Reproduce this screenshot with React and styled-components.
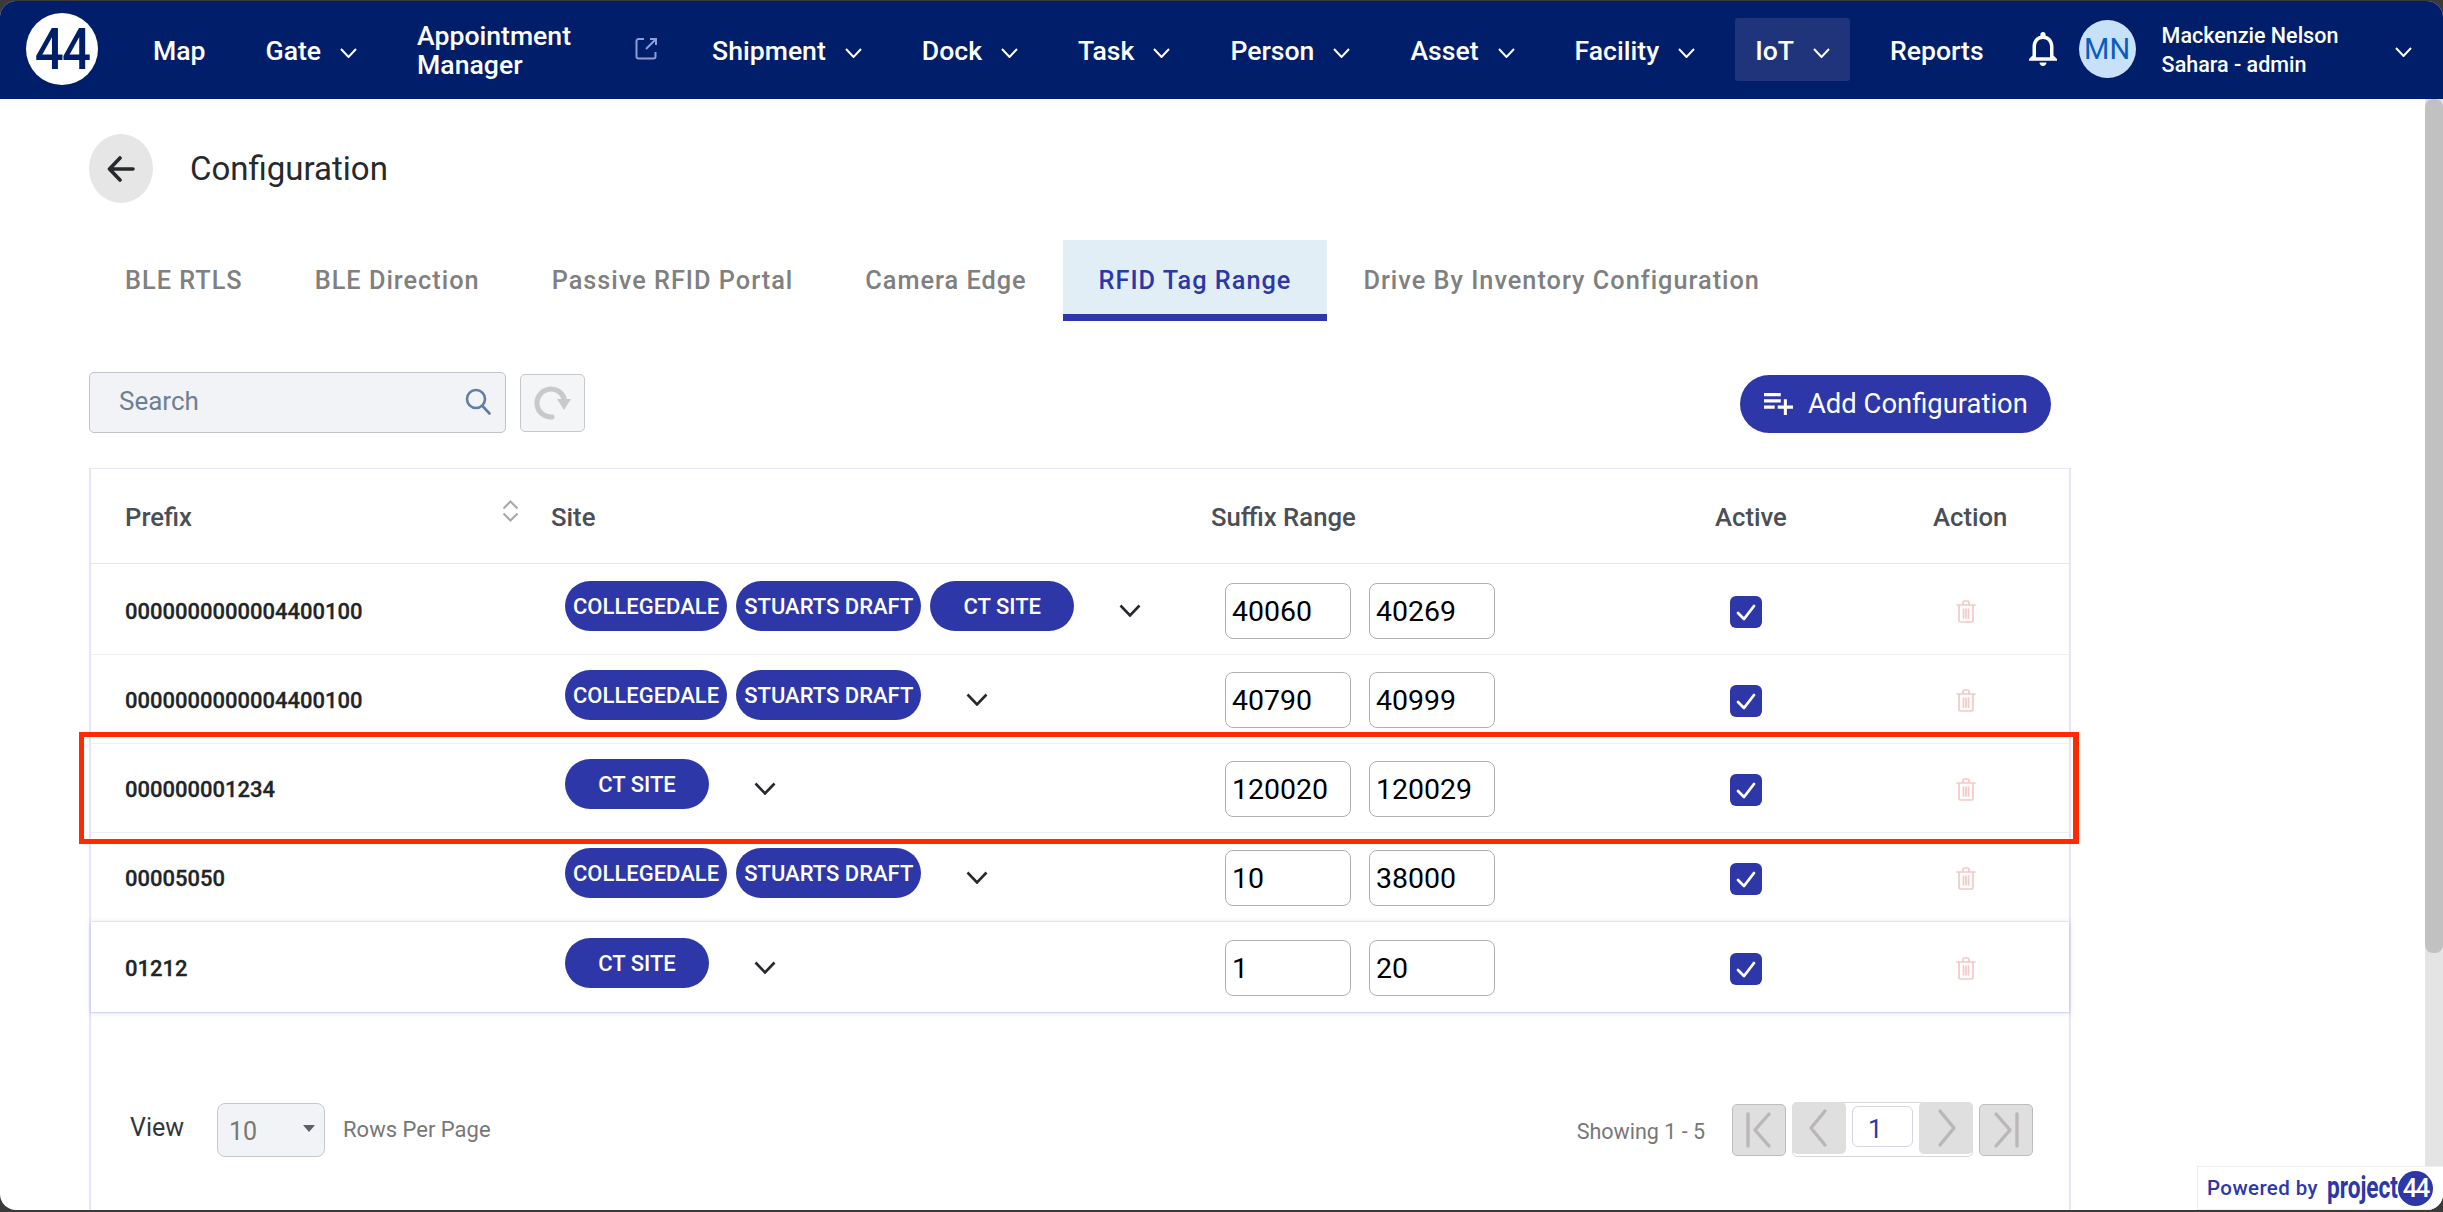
import React from "react";
import styled, { createGlobalStyle, css } from "styled-components";

const GlobalStyle = createGlobalStyle`
  html, body {
    margin: 0;
    padding: 0;
    background: #3a3a3a;
    overflow: hidden;
  }
  * {
    box-sizing: border-box;
  }
  body {
    font-family: Roboto, "Liberation Sans", sans-serif;
  }
`;

const Window = styled.div`
  position: relative;
  width: 2443px;
  height: 1212px;
  padding: 1px 0 2px;
  background: #3a3a3a;
`;
const Shell = styled.div`
  display: flex;
  flex-direction: column;
  height: 100%;
  background: #fff;
  border-radius: 16px;
  overflow: hidden;
`;

/* top bar */
const TopBar = styled.header`
  display: flex;
  align-items: center;
  flex: 0 0 98px;
  padding: 0 0 2px 26px;
  background: #011e6b;
  color: #fff;
`;
const Logo = styled.div`
  flex: 0 0 72px;
  height: 72px;
  display: flex;
  align-items: center;
  justify-content: center;
  margin-right: 35px;
  border-radius: 50%;
  background: #fff;
  color: #011e6b;
  font-size: 58px;
  font-weight: 500;
  letter-spacing: -2px;
`;
const LogoText = styled.span`
  display: inline-block;
  transform: scaleX(0.88);
`;
const NavList = styled.nav`
  display: flex;
  align-items: center;
  gap: 20px;
`;
const NavItem = styled.div`
  display: flex;
  align-items: center;
  height: 63px;
  padding: 2px 20px 0;
  font-size: 26.6px;
  font-weight: 500;
  line-height: 29px;
  border-radius: 3px;
  background: ${(props) => (props.$active ? "#20347c" : "transparent")};
`;
const NavLabelWrap = styled.span`
  width: 157px;
`;
const NavChevron = styled.svg`
  width: 17px;
  height: 10px;
  margin: 5px 0 0 19px;
  fill: none;
  stroke: #fff;
  stroke-width: 2;
`;
const ExternalIcon = styled.svg`
  width: 23px;
  height: 23px;
  margin: -3px -6px 0 61px;
  fill: none;
  stroke: #8d9dd6;
  stroke-width: 2;
`;
const BellIcon = styled.svg`
  width: 28px;
  height: 36px;
  margin: 0 22px 0 25px;
  fill: #fff;
`;
const Avatar = styled.div`
  flex: 0 0 57px;
  height: 58px;
  display: flex;
  align-items: center;
  justify-content: center;
  border-radius: 50%;
  background: #c7e1f9;
  color: #0a5cbe;
  font-size: 29px;
`;
const UserInfo = styled.div`
  width: 233px;
  margin-left: 26px;
  padding-top: 2px;
  font-size: 21.5px;
  font-weight: 500;
  line-height: 29px;
`;
const UserChevron = styled(NavChevron)`
  margin-left: 0;
`;

/* page body */
const Body = styled.div`
  display: flex;
  flex: 1;
  min-height: 0;
`;
const Content = styled.main`
  flex: 1;
  min-width: 0;
  padding: 35px 0 0 89px;
`;
const TrackBar = styled.div`
  flex: 0 0 18px;
  background: #e4e4e4;
`;
const TrackThumb = styled.div`
  height: 854px;
  background: #c1c1c1;
  border-radius: 8px;
`;

const TitleRow = styled.div`
  display: flex;
  align-items: center;
  height: 69px;
`;
const BackButton = styled.button`
  width: 64px;
  height: 69px;
  display: flex;
  align-items: center;
  justify-content: center;
  padding: 0;
  border: none;
  border-radius: 50%;
  background: #e6e6e6;
`;
const BackIcon = styled.svg`
  width: 28px;
  height: 26px;
  fill: none;
  stroke: #26292d;
  stroke-width: 3.6;
  stroke-linecap: round;
  stroke-linejoin: round;
`;
const PageTitle = styled.h1`
  margin: 0 0 0 37px;
  font-size: 33px;
  font-weight: 400;
  color: #26292d;
`;

const Tabs = styled.div`
  display: flex;
  margin-top: 37px;
  height: 81px;
`;
const Tab = styled.div`
  display: flex;
  align-items: center;
  padding: 7px 36px ${(props) => (props.$active ? "0" : "7px")};
  font-size: 25.3px;
  font-weight: 500;
  letter-spacing: 1px;
  color: ${(props) => (props.$active ? "#2e37a8" : "#808080")};
  ${(props) =>
    props.$active &&
    css`
      background: #e1eef5;
      border-bottom: 7px solid #2e37a8;
    `}
`;

const Toolbar = styled.div`
  display: flex;
  align-items: center;
  width: 1962px;
  height: 61px;
  margin-top: 51px;
`;
const SearchBox = styled.div`
  display: flex;
  align-items: center;
  width: 417px;
  height: 61px;
  padding: 0 14px 3px 27px;
  background: #f1f3f7;
  border: 1.5px solid #c0c3c9;
  border-radius: 5px;
`;
const SearchInput = styled.input`
  flex: 1;
  min-width: 0;
  border: none;
  outline: none;
  background: transparent;
  font-family: inherit;
  font-size: 26px;
  &::placeholder {
    color: #6f7e92;
    opacity: 1;
  }
`;
const SearchIcon = styled.svg`
  width: 26px;
  height: 27px;
  fill: none;
  stroke: #5f7ea3;
  stroke-width: 2.6;
  stroke-linecap: round;
`;
const RefreshButton = styled.button`
  width: 65px;
  height: 58px;
  display: flex;
  align-items: center;
  justify-content: center;
  margin-left: 14px;
  padding: 0;
  background: #f4f5f7;
  border: 1.5px solid #c6c8cc;
  border-radius: 5px;
`;
const RefreshIcon = styled.svg`
  width: 40px;
  height: 36px;
`;
const AddButton = styled.button`
  display: flex;
  align-items: center;
  width: 311px;
  height: 58px;
  margin: 2px 0 0 auto;
  padding: 0 0 0 24px;
  border: none;
  border-radius: 29px;
  background: #2e37a8;
  color: #fff;
  font-family: inherit;
  font-size: 27.4px;
  font-weight: 400;
`;
const AddIcon = styled.svg`
  width: 29px;
  height: 22px;
  margin-right: 15px;
  fill: #fff;
`;

/* table */
const columns = css`
  display: grid;
  grid-template-columns: 426px 660px 504px 218px 1fr;
  padding-left: 34px;
  align-items: center;
`;
const Card = styled.section`
  width: 1982px;
  height: 800px;
  margin-top: 35px;
  border: solid #e4e4fa;
  border-width: 1px 2px 0;
`;
const HeadRow = styled.div`
  ${columns}
  height: 95px;
  padding-top: 2px;
  border-bottom: 1.5px solid #e6e6ee;
  font-size: 25.7px;
  font-weight: 500;
  color: #4a4f57;
`;
const PrefixHead = styled.div`
  display: flex;
  align-items: flex-start;
  justify-content: space-between;
  padding-right: 32px;
`;
const SortIcon = styled.svg`
  width: 17px;
  height: 22px;
  margin-top: -2px;
  fill: none;
  stroke: #a8a8a8;
  stroke-width: 2;
`;
const Row = styled.div`
  ${columns}
  position: relative;
  height: ${(props) => (props.$tall ? "91px" : "89px")};
  padding-top: ${(props) => (props.$first ? "2px" : "0")};
  margin-left: ${(props) => (props.$hover ? "-1px" : "0")};
  margin-right: ${(props) => (props.$hover ? "-1px" : "0")};
  border-bottom: 1.5px solid ${(props) => (props.$hover ? "#d4d4f5" : "#f0f0f4")};
  ${(props) =>
    props.$hover &&
    css`
      border-left: 1.5px solid #d4d4f5;
      border-right: 1.5px solid #d4d4f5;
      box-shadow: 0 0 4px rgba(180, 180, 240, 0.5);
    `}
`;
const Highlight = styled.div`
  position: absolute;
  top: -12px;
  bottom: -12px;
  left: -12px;
  right: -10px;
  border: 5px solid #ff2a00;
  border-right-width: 6px;
  pointer-events: none;
`;
const Prefix = styled.div`
  padding-top: 2px;
  font-size: 22px;
  font-weight: 500;
  color: #212529;
  -webkit-text-stroke: 0.3px #212529;
`;
const SiteCell = styled.div`
  display: flex;
  align-items: center;
  padding-left: 14px;
`;
const Chip = styled.div`
  min-width: 144px;
  height: 50px;
  display: flex;
  align-items: center;
  justify-content: center;
  margin: 0 9px 9px 0;
  padding: 2px 8px 0;
  border-radius: 25px;
  background: #2e37a8;
  color: #fff;
  font-size: 22px;
  font-weight: 500;
  white-space: nowrap;
`;
const SiteChevron = styled.svg`
  width: 22px;
  height: 13px;
  margin-left: 36px;
  fill: none;
  stroke: #26292d;
  stroke-width: 2.6;
`;
const RangeCell = styled.div`
  display: flex;
  gap: 18px;
  padding: 2px 0 0 14px;
`;
const RangeInput = styled.input`
  width: 126px;
  height: 56px;
  padding: 0 0 0 6px;
  border: 1.5px solid #b0b0b0;
  border-radius: 8px;
  outline: none;
  background: #fff;
  color: #000;
  font-family: inherit;
  font-size: 28.5px;
`;
const CheckCell = styled.div`
  padding: 4px 0 0 15px;
`;
const CheckBox = styled.div`
  width: 32px;
  height: 32px;
  display: flex;
  align-items: center;
  justify-content: center;
  border-radius: 6px;
  background: #2e37a8;
`;
const CheckIcon = styled.svg`
  width: 20px;
  height: 18px;
  fill: none;
  stroke: #fff;
  stroke-width: 2.8;
  stroke-linecap: round;
  stroke-linejoin: round;
`;
const ActionCell = styled.div`
  display: flex;
  padding: 3px 0 0 23px;
`;
const TrashIcon = styled.svg`
  width: 20px;
  height: 23px;
  fill: none;
  stroke: #f3c9c6;
  stroke-width: 1.7;
  stroke-linecap: round;
`;

/* footer */
const Footer = styled.div`
  display: flex;
  align-items: center;
  padding: 89px 36px 0 39px;
`;
const ViewLabel = styled.span`
  margin: -4px 33px 0 0;
  font-size: 25px;
  color: #33373c;
`;
const PageSize = styled.div`
  display: flex;
  align-items: center;
  justify-content: space-between;
  width: 108px;
  height: 54px;
  padding: 4px 9px 0 11px;
  background: #f1f3f7;
  border: 1.5px solid #c4c8d2;
  border-radius: 8px;
  color: #777;
  font-size: 25px;
`;
const Caret = styled.span`
  width: 0;
  height: 0;
  margin-top: -6px;
  border-left: 6px solid transparent;
  border-right: 6px solid transparent;
  border-top: 7px solid #5c6068;
`;
const MutedText = styled.span`
  font-size: 21.5px;
  color: #777;
`;
const RowsLabel = styled(MutedText)`
  margin-left: 18px;
  font-size: 22px;
`;
const Showing = styled(MutedText)`
  margin-left: auto;
  margin-right: 27px;
  padding-top: 4px;
`;
const PagerEdge = styled.button`
  width: 54px;
  height: 52px;
  display: flex;
  align-items: center;
  justify-content: center;
  padding: 0;
  background: #dfdfdf;
  border: 1.5px solid #bdbdbd;
  border-radius: 5px;
`;
const PagerMiddle = styled.div`
  display: flex;
  justify-content: space-between;
  width: 181px;
  height: 55px;
  margin: 0 6px;
  border: 1.5px solid #d8d8d8;
  border-top-width: 1px;
  border-radius: 5px;
`;
const PagerStep = styled.button`
  width: 54px;
  height: 52px;
  display: flex;
  align-items: center;
  justify-content: center;
  margin: -1px -1px 0;
  padding: 0;
  background: #dfdfdf;
  border: none;
  border-radius: 5px;
`;
const PageNumber = styled.div`
  width: 61px;
  height: 41px;
  align-self: center;
  margin-top: -6px;
  padding: 7px 0 0 15px;
  border: 1.5px solid #d2d6e2;
  border-radius: 6px;
  background: #fff;
  color: #2e37a8;
  font-size: 26px;
  line-height: 30px;
`;
const PagerIcon = styled.svg`
  width: 44px;
  height: 40px;
  fill: none;
  stroke: #bcb7b7;
  stroke-width: 3.4;
  stroke-linecap: round;
  stroke-linejoin: round;
`;

/* badge */
const PoweredBadge = styled.div`
  position: absolute;
  left: 2197px;
  right: 0;
  top: 1166px;
  height: 44px;
  display: flex;
  align-items: center;
  padding-left: 9px;
  background: #fff;
  border: 1.5px solid #eeeeee;
  border-right: none;
  border-radius: 0 0 16px 0;
  color: #2e37a8;
`;
const PoweredText = styled.span`
  font-size: 20.5px;
  font-weight: 500;
  letter-spacing: 0.4px;
`;
const PoweredBrand = styled.span`
  display: inline-block;
  width: 71px;
  margin-left: 9px;
  font-size: 31px;
  font-weight: 700;
  line-height: 36px;
  transform: scaleX(0.73);
  transform-origin: left center;
`;
const PoweredMark = styled.span`
  width: 35px;
  height: 35px;
  display: flex;
  align-items: center;
  justify-content: center;
  border-radius: 50%;
  background: #2e37a8;
  color: #fff;
  font-size: 26px;
  font-weight: 500;
  letter-spacing: -2px;
`;

const navItems = [
  { label: "Map" },
  { label: "Gate", menu: true },
  { label: "Appointment Manager", link: true },
  { label: "Shipment", menu: true },
  { label: "Dock", menu: true },
  { label: "Task", menu: true },
  { label: "Person", menu: true },
  { label: "Asset", menu: true },
  { label: "Facility", menu: true },
  { label: "IoT", menu: true, active: true },
  { label: "Reports" },
];

const tabs = [
  "BLE RTLS",
  "BLE Direction",
  "Passive RFID Portal",
  "Camera Edge",
  "RFID Tag Range",
  "Drive By Inventory Configuration",
];

const rows = [
  { prefix: "0000000000004400100", sites: ["COLLEGEDALE", "STUARTS DRAFT", "CT SITE"], from: "40060", to: "40269" },
  { prefix: "0000000000004400100", sites: ["COLLEGEDALE", "STUARTS DRAFT"], from: "40790", to: "40999" },
  { prefix: "000000001234", sites: ["CT SITE"], from: "120020", to: "120029" },
  { prefix: "00005050", sites: ["COLLEGEDALE", "STUARTS DRAFT"], from: "10", to: "38000" },
  { prefix: "01212", sites: ["CT SITE"], from: "1", to: "20" },
];

const Chevron = () => (
  <NavChevron viewBox="0 0 17 10">
    <path d="M1 1l7.5 8L16 1" />
  </NavChevron>
);

const TableRow = ({ row, index }) => (
  <Row
    $first={index === 0}
    $tall={index === 0 || index === rows.length - 1}
    $hover={index === rows.length - 1}
  >
    <Prefix>{row.prefix}</Prefix>
    <SiteCell>
      {row.sites.map((site) => (
        <Chip key={site}>{site}</Chip>
      ))}
      <SiteChevron viewBox="0 0 22 13">
        <path d="M1.5 1.5L11 11.5l9.5-10" />
      </SiteChevron>
    </SiteCell>
    <RangeCell>
      <RangeInput defaultValue={row.from} readOnly />
      <RangeInput defaultValue={row.to} readOnly />
    </RangeCell>
    <CheckCell>
      <CheckBox>
        <CheckIcon viewBox="0 0 20 18">
          <path d="M2 10l6 6L18 3" />
        </CheckIcon>
      </CheckBox>
    </CheckCell>
    <ActionCell>
      <TrashIcon viewBox="0 0 20 23">
        <path d="M1 5h18M7 5V2.5A1.5 1.5 0 0 1 8.5 1h3A1.5 1.5 0 0 1 13 2.5V5M3 5v15.5A1.5 1.5 0 0 0 4.5 22h11a1.5 1.5 0 0 0 1.5-1.5V5M7.5 9v9M10 9v9M12.5 9v9" />
      </TrashIcon>
    </ActionCell>
    {index === 2 && <Highlight />}
  </Row>
);

const App = () => {
  return (
    <Window>
      <GlobalStyle />
      <Shell>
        <TopBar>
          <Logo>
            <LogoText>44</LogoText>
          </Logo>
          <NavList>
            {navItems.map((item) => (
              <NavItem key={item.label} $active={item.active}>
                {item.link ? <NavLabelWrap>{item.label}</NavLabelWrap> : item.label}
                {item.menu && <Chevron />}
                {item.link && (
                  <ExternalIcon viewBox="0 0 23 23">
                    <path d="M9 2H3.5A2 2 0 0 0 1.5 4v15.5a2 2 0 0 0 2 2h15a2 2 0 0 0 2-2V15M11 12l9-9M15 2h6v6" />
                  </ExternalIcon>
                )}
              </NavItem>
            ))}
          </NavList>
          <BellIcon viewBox="4 2.5 16 19.5">
            <path d="M12 22c1.1 0 2-.9 2-2h-4c0 1.1.9 2 2 2zm6-6v-5c0-3.07-1.63-5.64-4.5-6.32V4c0-.83-.67-1.5-1.5-1.5s-1.5.67-1.5 1.5v.68C7.64 5.36 6 7.92 6 11v5l-2 2v1h16v-1l-2-2zm-2 1H8v-6c0-2.48 1.51-4.5 4-4.5s4 2.02 4 4.5v6z" />
          </BellIcon>
          <Avatar>MN</Avatar>
          <UserInfo>
            <div>Mackenzie Nelson</div>
            <div>Sahara - admin</div>
          </UserInfo>
          <UserChevron viewBox="0 0 17 10">
            <path d="M1 1l7.5 8L16 1" />
          </UserChevron>
        </TopBar>
        <Body>
          <Content>
            <TitleRow>
              <BackButton>
                <BackIcon viewBox="0 0 28 26">
                  <path d="M26 13H3M13 2L2.5 13 13 24" />
                </BackIcon>
              </BackButton>
              <PageTitle>Configuration</PageTitle>
            </TitleRow>
            <Tabs>
              {tabs.map((tab) => (
                <Tab key={tab} $active={tab === "RFID Tag Range"}>
                  {tab}
                </Tab>
              ))}
            </Tabs>
            <Toolbar>
              <SearchBox>
                <SearchInput placeholder="Search" />
                <SearchIcon viewBox="0 0 26 27">
                  <circle cx="11" cy="11" r="9" />
                  <path d="M17.5 18l7 7.5" />
                </SearchIcon>
              </SearchBox>
              <RefreshButton>
                <RefreshIcon viewBox="0 0 40 36">
                  <path d="M19 32A14 14 0 1 1 31 13" fill="none" stroke="#c9c9c9" strokeWidth="5" strokeLinecap="round" />
                  <path d="M24 14h14l-7 11z" fill="#c9c9c9" />
                </RefreshIcon>
              </RefreshButton>
              <AddButton>
                <AddIcon viewBox="3 6 19 14" preserveAspectRatio="none">
                  <path d="M14 10H3v2h11v-2zm0-4H3v2h11V6zm4 8v-4h-2v4h-4v2h4v4h2v-4h4v-2h-4zM3 16h7v-2H3v2z" />
                </AddIcon>
                Add Configuration
              </AddButton>
            </Toolbar>
            <Card>
              <HeadRow>
                <PrefixHead>
                  Prefix
                  <SortIcon viewBox="0 0 17 22">
                    <path d="M1.5 8.5L8.5 1.5l7 7M1.5 13.5l7 7 7-7" />
                  </SortIcon>
                </PrefixHead>
                <div>Site</div>
                <div>Suffix Range</div>
                <div>Active</div>
                <div>Action</div>
              </HeadRow>
              {rows.map((row, index) => (
                <TableRow key={row.from} row={row} index={index} />
              ))}
              <Footer>
                <ViewLabel>View</ViewLabel>
                <PageSize>
                  10
                  <Caret />
                </PageSize>
                <RowsLabel>Rows Per Page</RowsLabel>
                <Showing>Showing 1 - 5</Showing>
                <PagerEdge>
                  <PagerIcon viewBox="0 0 44 40">
                    <path d="M11 4v32M32 4L18 20l14 16" />
                  </PagerIcon>
                </PagerEdge>
                <PagerMiddle>
                  <PagerStep>
                    <PagerIcon viewBox="0 0 44 40">
                      <path d="M28 3L14 20l14 17" />
                    </PagerIcon>
                  </PagerStep>
                  <PageNumber>1</PageNumber>
                  <PagerStep>
                    <PagerIcon viewBox="0 0 44 40">
                      <path d="M16 3l14 17-14 17" />
                    </PagerIcon>
                  </PagerStep>
                </PagerMiddle>
                <PagerEdge>
                  <PagerIcon viewBox="0 0 44 40">
                    <path d="M33 4v32M12 4l14 16-14 16" />
                  </PagerIcon>
                </PagerEdge>
              </Footer>
            </Card>
          </Content>
          <TrackBar>
            <TrackThumb />
          </TrackBar>
        </Body>
      </Shell>
      <PoweredBadge>
        <PoweredText>Powered by</PoweredText>
        <PoweredBrand>project</PoweredBrand>
        <PoweredMark>44</PoweredMark>
      </PoweredBadge>
    </Window>
  );
};

export default App;
